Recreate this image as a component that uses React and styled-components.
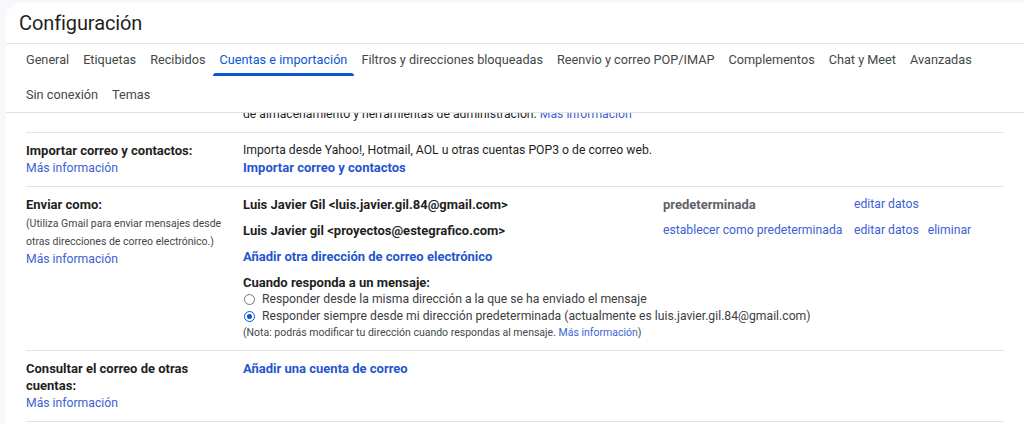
import React from "react"
import styled, { createGlobalStyle, css } from "styled-components"

const GlobalStyle = createGlobalStyle`
  html, body {
    margin: 0;
    padding: 0;
    background: #f6f8fc;
    font-family: Roboto, "Liberation Sans", Arial, sans-serif;
    color: #1f1f1f;
  }
`

const Page = styled.div`
  height: 424px;
  padding: 3px 0 0 6px;
  box-sizing: border-box;
  overflow: hidden;
`

const Panel = styled.div`
  background: #fff;
  border-top-left-radius: 16px;
  height: 100%;
  display: flex;
  flex-direction: column;
`

const Title = styled.h1`
  margin: 0;
  height: 40px;
  padding-left: 13px;
  font-size: 20px;
  letter-spacing: -0.1px;
  font-weight: 400;
  line-height: 40px;
  color: #1f1f1f;
  border-bottom: 1px solid #e3e3e3;
`

const Tabs = styled.nav`
  display: flex;
  flex-wrap: wrap;
  row-gap: 2px;
  padding: 0 13px;
  border-bottom: 1px solid #e3e3e3;
`

const Tab = styled.a`
  position: relative;
  display: block;
  height: 33px;
  line-height: 31px;
  padding: 0 7px;
  font-size: 12.7px;
  color: #444746;
  text-decoration: none;
  white-space: nowrap;
  ${p =>
    p.$active &&
    css`
      color: #0b57d0;
      &::after {
        content: "";
        position: absolute;
        left: 0;
        right: 0;
        bottom: 1px;
        height: 3px;
        border-radius: 3px 3px 0 0;
        background: #0b57d0;
      }
    `}
`

const Scroll = styled.div`
  flex: 1;
  overflow: hidden;
  padding: 0 20px;
`

const Shifted = styled.div`
  margin-top: -33px;
`

const Row = styled.div`
  display: grid;
  grid-template-columns: 217px 1fr;
  padding: 9px 0 9px;
  border-bottom: 1px solid #e3e3e3;
  font-size: 12.2px;
  line-height: 17px;
`

const Label = styled.div`
  font-weight: 700;
  font-size: 13px;
  color: #1f1f1f;
  padding-right: 16px;
`

const Hint = styled.div`
  font-size: 10.5px;
  line-height: 17.5px;
  color: #444746;
  font-weight: 400;
  margin-top: 2px;
`

const Link = styled.a`
  color: ${p => (p.$strong ? "#1f55cf" : "#3d5fd4")};
  font-weight: ${p => (p.$strong ? 700 : 400)};
  font-size: ${p => (p.$strong ? "13px" : "12.2px")};
  text-decoration: none;
  white-space: nowrap;
  cursor: pointer;
`

const Block = styled.div`
  display: block;
  font-weight: 400;
`

const SenderGrid = styled.div`
  display: grid;
  grid-template-columns: 420px 191px auto;
  row-gap: 9px;
  margin-bottom: 9px;
`

const SenderName = styled.div`
  font-weight: 700;
  font-size: 13px;
`

const Status = styled.div`
  font-weight: 700;
  font-size: 13px;
  color: #5f6368;
`

const Actions = styled.div`
  display: flex;
  gap: 9px;
`

const Question = styled.div`
  font-weight: 700;
  font-size: 13px;
  margin-top: 8px;
`

const Option = styled.label`
  display: flex;
  align-items: center;
  gap: 5px;
  color: #3c4043;
`

const RadioMark = styled.span`
  width: 9px;
  height: 9px;
  border-radius: 50%;
  border: 1px solid ${p => (p.$checked ? "#0b57d0" : "#757575")};
  margin: 0 2px 0 1px;
  position: relative;
  flex: none;
  &::after {
    content: "";
    display: ${p => (p.$checked ? "block" : "none")};
    position: absolute;
    inset: 2px;
    border-radius: 50%;
    background: #0b57d0;
  }
`

const Note = styled.div`
  font-size: 10.5px;
  line-height: 16px;
  color: #444746;
  ${Link} {
    font-size: 10.5px;
  }
`

const TABS = [
  "General",
  "Etiquetas",
  "Recibidos",
  "Cuentas e importación",
  "Filtros y direcciones bloqueadas",
  "Reenvio y correo POP/IMAP",
  "Complementos",
  "Chat y Meet",
  "Avanzadas",
  "Sin conexión",
  "Temas",
]

const SENDERS = [
  {
    name: "Luis Javier Gil <luis.javier.gil.84@gmail.com>",
    main: true,
  },
  {
    name: "Luis Javier gil <proyectos@estegrafico.com>",
    main: false,
  },
]

const App = () => (
  <Page>
    <GlobalStyle />
    <Panel>
      <Title>Configuración</Title>
      <Tabs>
        {TABS.map(t => (
          <Tab key={t} $active={t === "Cuentas e importación"}>
            {t}
          </Tab>
        ))}
      </Tabs>
      <Scroll>
        <Shifted>
          <Row>
            <Label>Usar Gmail para trabajar:</Label>
            <div>
              <Block>Las empresas consiguen más espacio, direcciones personalizadas y más funciones</Block>
              <Block>
                de almacenamiento y herramientas de administración.{" "}
                <Link>Más información</Link>
              </Block>
            </div>
          </Row>
        </Shifted>
        <Row>
          <Label>
            Importar correo y contactos:
            <Block>
              <Link>Más información</Link>
            </Block>
          </Label>
          <div>
            <Block>Importa desde Yahoo!, Hotmail, AOL u otras cuentas POP3 o de correo web.</Block>
            <Link $strong>Importar correo y contactos</Link>
          </div>
        </Row>
        <Row>
          <Label>
            Enviar como:
            <Hint>
              (Utiliza Gmail para enviar mensajes desde otras direcciones de correo electrónico.)
            </Hint>
            <Block>
              <Link>Más información</Link>
            </Block>
          </Label>
          <div>
            <SenderGrid>
              {SENDERS.map(s => (
                <React.Fragment key={s.name}>
                  <SenderName>{s.name}</SenderName>
                  {s.main ? (
                    <Status>predeterminada</Status>
                  ) : (
                    <Link>establecer como predeterminada</Link>
                  )}
                  <Actions>
                    <Link>editar datos</Link>
                    {!s.main && <Link>eliminar</Link>}
                  </Actions>
                </React.Fragment>
              ))}
            </SenderGrid>
            <Link $strong>Añadir otra dirección de correo electrónico</Link>
            <Question>Cuando responda a un mensaje:</Question>
            <Option>
              <RadioMark />
              Responder desde la misma dirección a la que se ha enviado el mensaje
            </Option>
            <Option>
              <RadioMark $checked />
              Responder siempre desde mi dirección predeterminada (actualmente es
              luis.javier.gil.84@gmail.com)
            </Option>
            <Note>
              (Nota: podrás modificar tu dirección cuando respondas al mensaje.{" "}
              <Link>Más información</Link>)
            </Note>
          </div>
        </Row>
        <Row>
          <Label>
            Consultar el correo de otras cuentas:
            <Block>
              <Link>Más información</Link>
            </Block>
          </Label>
          <div>
            <Link $strong>Añadir una cuenta de correo</Link>
          </div>
        </Row>
      </Scroll>
    </Panel>
  </Page>
)

export default App
